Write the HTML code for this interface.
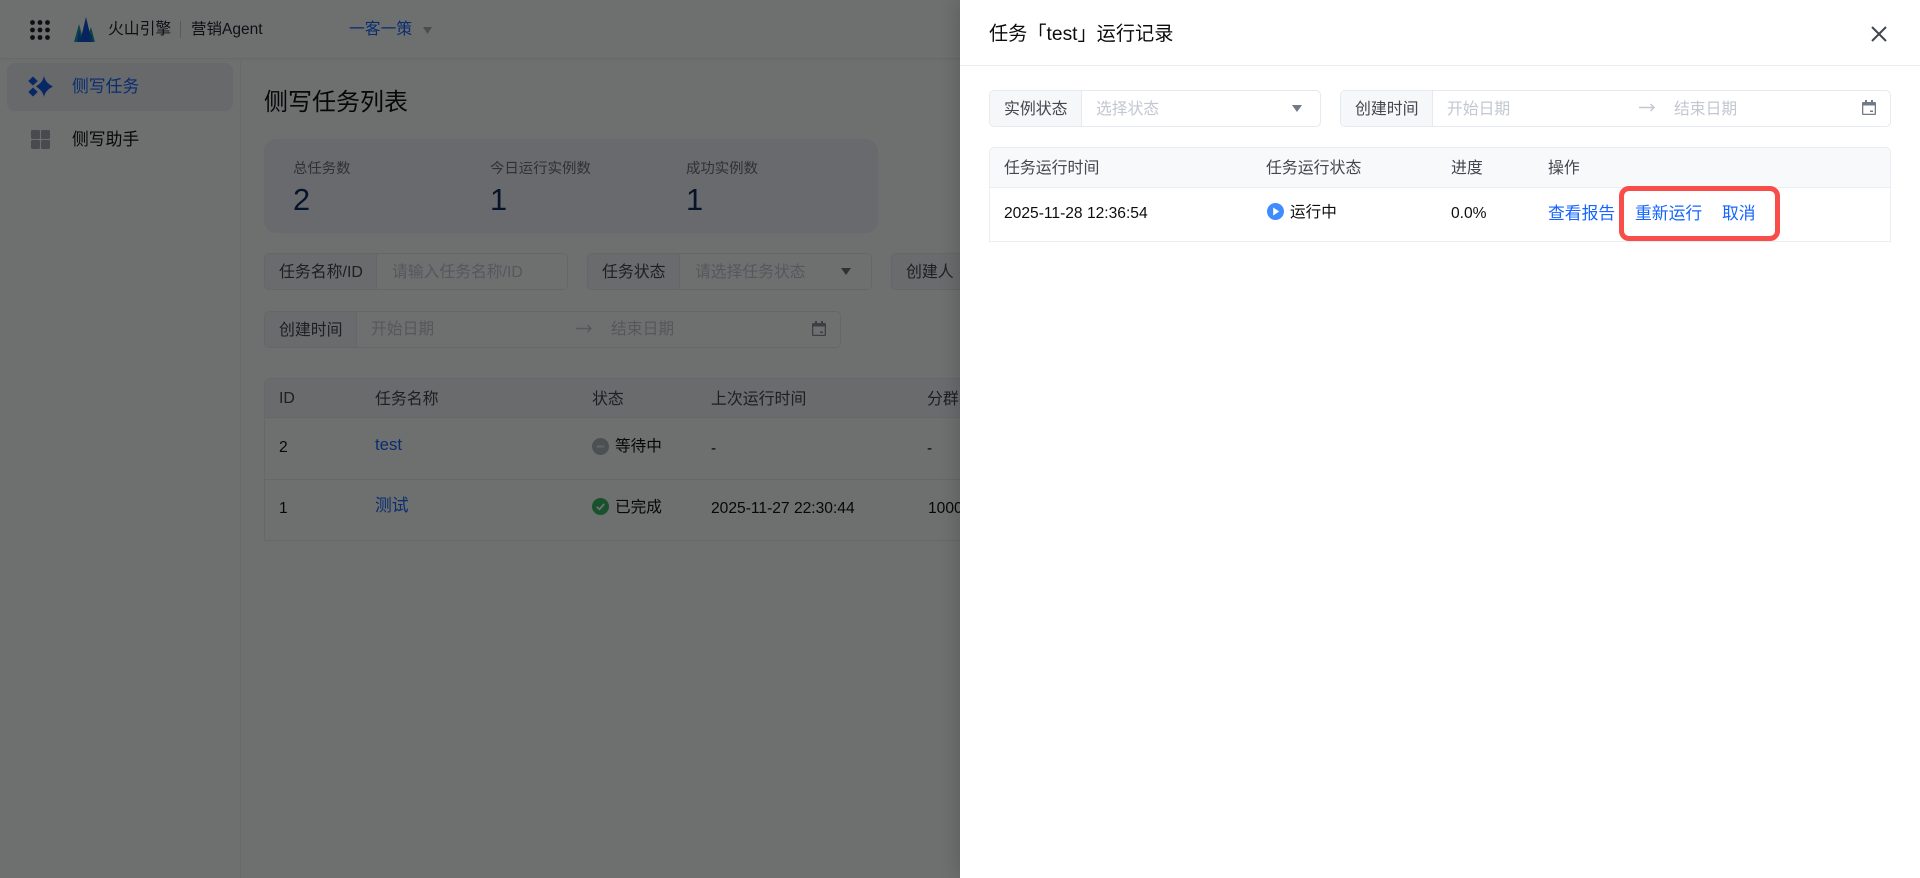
<!DOCTYPE html>
<html lang="zh"><head><meta charset="utf-8"><title>任务运行记录</title>
<style>
*{box-sizing:border-box}
html,body{margin:0;padding:0;width:1920px;height:878px;overflow:hidden;background:#fff}
body{font-family:"Liberation Sans","Noto Sans CJK SC",sans-serif;font-size:15.6px;color:#0c0d0e;position:relative}
.t{position:absolute;line-height:20px;height:20px;white-space:nowrap}
.b{position:absolute}
.blue{color:#1664ff}
.a{font-size:16.8px}
.ph{color:#c2c7d0;font-size:15.8px}
.lab{color:#42464e;font-size:15.9px}
.fld{position:absolute;border:1px solid #e6e9ee;border-radius:5px;background:#fff}
.fld i{position:absolute;left:0;top:0;bottom:0;background:#f6f7f9;border-right:1px solid #e6e9ee;border-radius:4px 0 0 4px}
.l .fld i{background:#f3f3f7}
#ov{position:absolute;left:0;top:0;width:960px;height:878px;background:rgba(0,4,4,.57);z-index:5}
#panel{position:absolute;left:960px;top:0;width:960px;height:878px;background:#fff;z-index:6;box-shadow:-4px 0 16px rgba(0,0,0,.14)}
svg{position:absolute;display:block}
</style></head><body>

<!-- underlying page -->
<div class="l">
<div class="b" style="left:0;top:0;width:960px;height:59px;background:#fff;border-bottom:1px solid #eceef1;box-shadow:0 1px 4px rgba(0,0,0,.04)"></div>
<div class="b" style="left:240px;top:60px;width:1px;height:818px;background:#f0f1f4"></div>

<svg style="left:30px;top:20px" width="20" height="20" viewBox="0 0 20 20" fill="#1d2129"><circle cx="2.500" cy="2.500" r="2.400"/><circle cx="10" cy="2.500" r="2.400"/><circle cx="17.500" cy="2.500" r="2.400"/><circle cx="2.500" cy="10" r="2.400"/><circle cx="10" cy="10" r="2.400"/><circle cx="17.500" cy="10" r="2.400"/><circle cx="2.500" cy="17.500" r="2.400"/><circle cx="10" cy="17.500" r="2.400"/><circle cx="17.500" cy="17.500" r="2.400"/></svg>
<svg style="left:74px;top:17px" width="21" height="25" viewBox="0 0 21 25"><path d="M0 25 L5 7 L10 25Z" fill="#1f9c9c"/><path d="M12 25 L17 10 L21 25Z" fill="#1f9c9c"/><path d="M3 25 L5 12 L8 25Z" fill="#1658d8"/><path d="M6 25 L12 0 L18 25Z" fill="#0f52d8"/><path d="M15 25 L17 16 L19 25Z" fill="#1658d8"/></svg>
<div class="t" style="left:108px;top:20px;font-size:15.8px;color:#1d2129">火山引擎</div>
<div class="b" style="left:180px;top:21px;width:1px;height:17px;background:#c9ccd2"></div>
<div class="t" style="left:191px;top:20px;font-size:15.5px;color:#1d2129">营销Agent</div>
<div class="t blue" style="left:349px;top:20px;font-size:15.8px">一客一策</div>
<svg style="left:423px;top:27px" width="9" height="7" viewBox="0 0 9 7"><path d="M0 0H9L4.500 7Z" fill="#a8adb6"/></svg>

<div class="b" style="left:7px;top:63px;width:226px;height:48px;background:#eeeef3;border-radius:8px"></div>
<svg style="left:28px;top:76px" width="25" height="21" viewBox="0 0 25 21" fill="#1257e6"><path d="M16 0 C17 5 20 8 25 10.500 C20 13 17 16 16 21 C15 16 12 13 8 10.500 C12 8 15 5 16 0Z"/><path d="M5 0.500 L9.700 5 L5 9.500 L0.300 5Z"/><path d="M5 11.500 L9.700 16 L5 20.500 L0.300 16Z"/></svg>
<div class="t blue a" style="left:72px;top:77px">侧写任务</div>
<svg style="left:31px;top:130px" width="19" height="19" viewBox="0 0 19 19" fill="#a6aab4"><rect width="9" height="9" rx="1.200"/><rect x="10" width="9" height="9" rx="1.200"/><rect y="10" width="9" height="9" rx="1.200"/><rect x="10" y="10" width="9" height="9" rx="1.200"/></svg>
<div class="t a" style="left:72px;top:130px">侧写助手</div>

<div class="t" style="left:264px;top:93px;font-size:24px;color:#0c0d0e">侧写任务列表</div>
<div class="b" style="left:264px;top:139px;width:614px;height:94px;background:#f2f2f7;border-radius:12px"></div>
<div class="t" style="left:293px;top:158px;font-size:14.4px;color:#6a6f78;margin-top:1px">总任务数</div>
<div class="t" style="left:490px;top:158px;font-size:14.4px;color:#6a6f78;margin-top:1px">今日运行实例数</div>
<div class="t" style="left:686px;top:158px;font-size:14.4px;color:#6a6f78;margin-top:1px">成功实例数</div>
<div class="t" style="left:293px;top:190px;font-size:30.8px;color:#0c2a5c">2</div>
<div class="t" style="left:490px;top:190px;font-size:30.8px;color:#0c2a5c">1</div>
<div class="t" style="left:686px;top:190px;font-size:30.8px;color:#0c2a5c">1</div>

<div class="fld" style="left:264px;top:253px;width:304px;height:37px"><i style="width:112px"></i></div>
<div class="t lab" style="left:279px;top:263px">任务名称/ID</div>
<div class="t ph" style="left:392px;top:263px">请输入任务名称/ID</div>
<div class="fld" style="left:587px;top:253px;width:285px;height:37px"><i style="width:92px"></i></div>
<div class="t lab" style="left:602px;top:263px">任务状态</div>
<div class="t ph" style="left:695px;top:263px">请选择任务状态</div>
<svg style="left:841px;top:268px" width="10" height="7" viewBox="0 0 10 7"><path d="M0 0H10L5 7Z" fill="#6a6f78"/></svg>
<div class="fld" style="left:891px;top:253px;width:200px;height:37px"><i style="width:80px"></i></div>
<div class="t lab" style="left:906px;top:263px">创建人</div>

<div class="fld" style="left:264px;top:311px;width:577px;height:37px"><i style="width:92px"></i></div>
<div class="t lab" style="left:279px;top:321px">创建时间</div>
<div class="t ph" style="left:371px;top:320px">开始日期</div>
<svg style="left:576px;top:324px" width="16" height="9" viewBox="0 0 16 9"><path d="M0 4.500H15M11.500 1L15 4.500L11.500 8" fill="none" stroke="#c2c7d0" stroke-width="1.400"/></svg>
<div class="t ph" style="left:611px;top:320px">结束日期</div>
<svg style="left:812px;top:321px" width="14" height="15" viewBox="0 0 14 15"><path d="M3 0H5V2H9V0H11V2H13A1 1 0 0 1 14 3V14A1 1 0 0 1 13 15H1A1 1 0 0 1 0 14V3A1 1 0 0 1 1 2H3ZM1.300 5.500V13.700H12.700V5.500Z M8 10.500H11V12H8Z" fill="#8a8f99" fill-rule="evenodd"/></svg>

<div class="b" style="left:264px;top:378px;width:800px;height:163px;border:1px solid #e9ecf0;border-radius:6px 0 0 0;overflow:hidden">
  <div style="height:39px;background:#f3f3f7;border-bottom:1px solid #e9ecf0"></div>
  <div style="height:62px;border-bottom:1px solid #e9ecf0"></div>
</div>
<div class="t lab" style="left:279px;top:389px">ID</div>
<div class="t lab" style="left:375px;top:390px">任务名称</div>
<div class="t lab" style="left:592px;top:390px">状态</div>
<div class="t lab" style="left:711px;top:390px">上次运行时间</div>
<div class="t lab" style="left:927px;top:390px">分群名称</div>
<div class="t" style="left:279px;top:438px">2</div>
<div class="t blue a" style="left:375px;top:435px">test</div>
<svg style="left:592px;top:438px" width="17" height="17" viewBox="0 0 17 17"><circle cx="8.500" cy="8.500" r="8.500" fill="#b3b6bd"/><rect x="4.500" y="7.500" width="8" height="2" rx="1" fill="#e4e6ea"/></svg>
<div class="t" style="left:615px;top:437px">等待中</div>
<div class="t" style="left:711px;top:439px">-</div>
<div class="t" style="left:927px;top:439px">-</div>
<div class="t" style="left:279px;top:499px">1</div>
<div class="t blue a" style="left:375px;top:496px">测试</div>
<svg style="left:592px;top:498px" width="17" height="17" viewBox="0 0 17 17"><circle cx="8.500" cy="8.500" r="8.500" fill="#3ab865"/><path d="M4.800 8.800L7.500 11.300L12.200 6" fill="none" stroke="#fff" stroke-width="1.800"/></svg>
<div class="t" style="left:615px;top:498px">已完成</div>
<div class="t" style="left:711px;top:499px">2025-11-27 22:30:44</div>
<div class="t" style="left:928px;top:499px">1000</div>
</div>

<div id="ov"></div>

<!-- drawer -->
<div id="panel">
  <div class="b" style="left:0;top:65px;width:960px;height:1px;background:#eaedf1"></div>
  <div class="t" style="left:29px;top:25px;font-size:19.2px;color:#0c0d0e">任务「test」运行记录</div>
  <svg style="left:911px;top:26px" width="16" height="16" viewBox="0 0 16 16"><path d="M1 1L15 15M15 1L1 15" stroke="#42464e" stroke-width="2" fill="none"/></svg>

  <div class="fld" style="left:29px;top:90px;width:332px;height:37px"><i style="width:92px"></i></div>
  <div class="t lab" style="left:44px;top:100px">实例状态</div>
  <div class="t ph" style="left:136px;top:100px">选择状态</div>
  <svg style="left:332px;top:105px" width="10" height="7" viewBox="0 0 10 7"><path d="M0 0H10L5 7Z" fill="#737a87"/></svg>

  <div class="fld" style="left:380px;top:90px;width:551px;height:37px"><i style="width:92px"></i></div>
  <div class="t lab" style="left:395px;top:100px">创建时间</div>
  <div class="t ph" style="left:487px;top:100px">开始日期</div>
  <svg style="left:679px;top:103px" width="16" height="9" viewBox="0 0 16 9"><path d="M0 4.500H15M11.500 1L15 4.500L11.500 8" fill="none" stroke="#c2c7d0" stroke-width="1.400"/></svg>
  <div class="t ph" style="left:714px;top:100px">结束日期</div>
  <svg style="left:902px;top:100px" width="14" height="15" viewBox="0 0 14 15"><path d="M3 0H5V2H9V0H11V2H13A1 1 0 0 1 14 3V14A1 1 0 0 1 13 15H1A1 1 0 0 1 0 14V3A1 1 0 0 1 1 2H3ZM1.300 5.500V13.700H12.700V5.500Z M8 10.500H11V12H8Z" fill="#737a87" fill-rule="evenodd"/></svg>

  <div class="b" style="left:29px;top:147px;width:902px;height:95px;border:1px solid #eaedf1;border-radius:5px 5px 0 0;overflow:hidden">
    <div style="height:40px;background:#f8f9fb;border-bottom:1px solid #eaedf1"></div>
  </div>
  <div class="t lab" style="left:44px;top:159px">任务运行时间</div>
  <div class="t lab" style="left:306px;top:159px">任务运行状态</div>
  <div class="t lab" style="left:491px;top:159px">进度</div>
  <div class="t lab" style="left:588px;top:159px">操作</div>
  <div class="t" style="left:44px;top:204px">2025-11-28 12:36:54</div>
  <svg style="left:307px;top:203px" width="17" height="17" viewBox="0 0 17 17"><circle cx="8.500" cy="8.500" r="8.500" fill="#3f8cff"/><path d="M6.200 4.500L12.200 8.500L6.200 12.500Z" fill="#fff"/></svg>
  <div class="t" style="left:330px;top:203px">运行中</div>
  <div class="t" style="left:491px;top:204px">0.0%</div>
  <div class="t blue a" style="left:588px;top:204px">查看报告</div>
  <div class="t blue a" style="left:675px;top:204px">重新运行</div>
  <div class="t blue a" style="left:762px;top:204px">取消</div>
  <div class="b" style="left:659px;top:186px;width:161px;height:55px;border:5px solid #f94d4a;border-radius:10px"></div>
</div>
</body></html>
